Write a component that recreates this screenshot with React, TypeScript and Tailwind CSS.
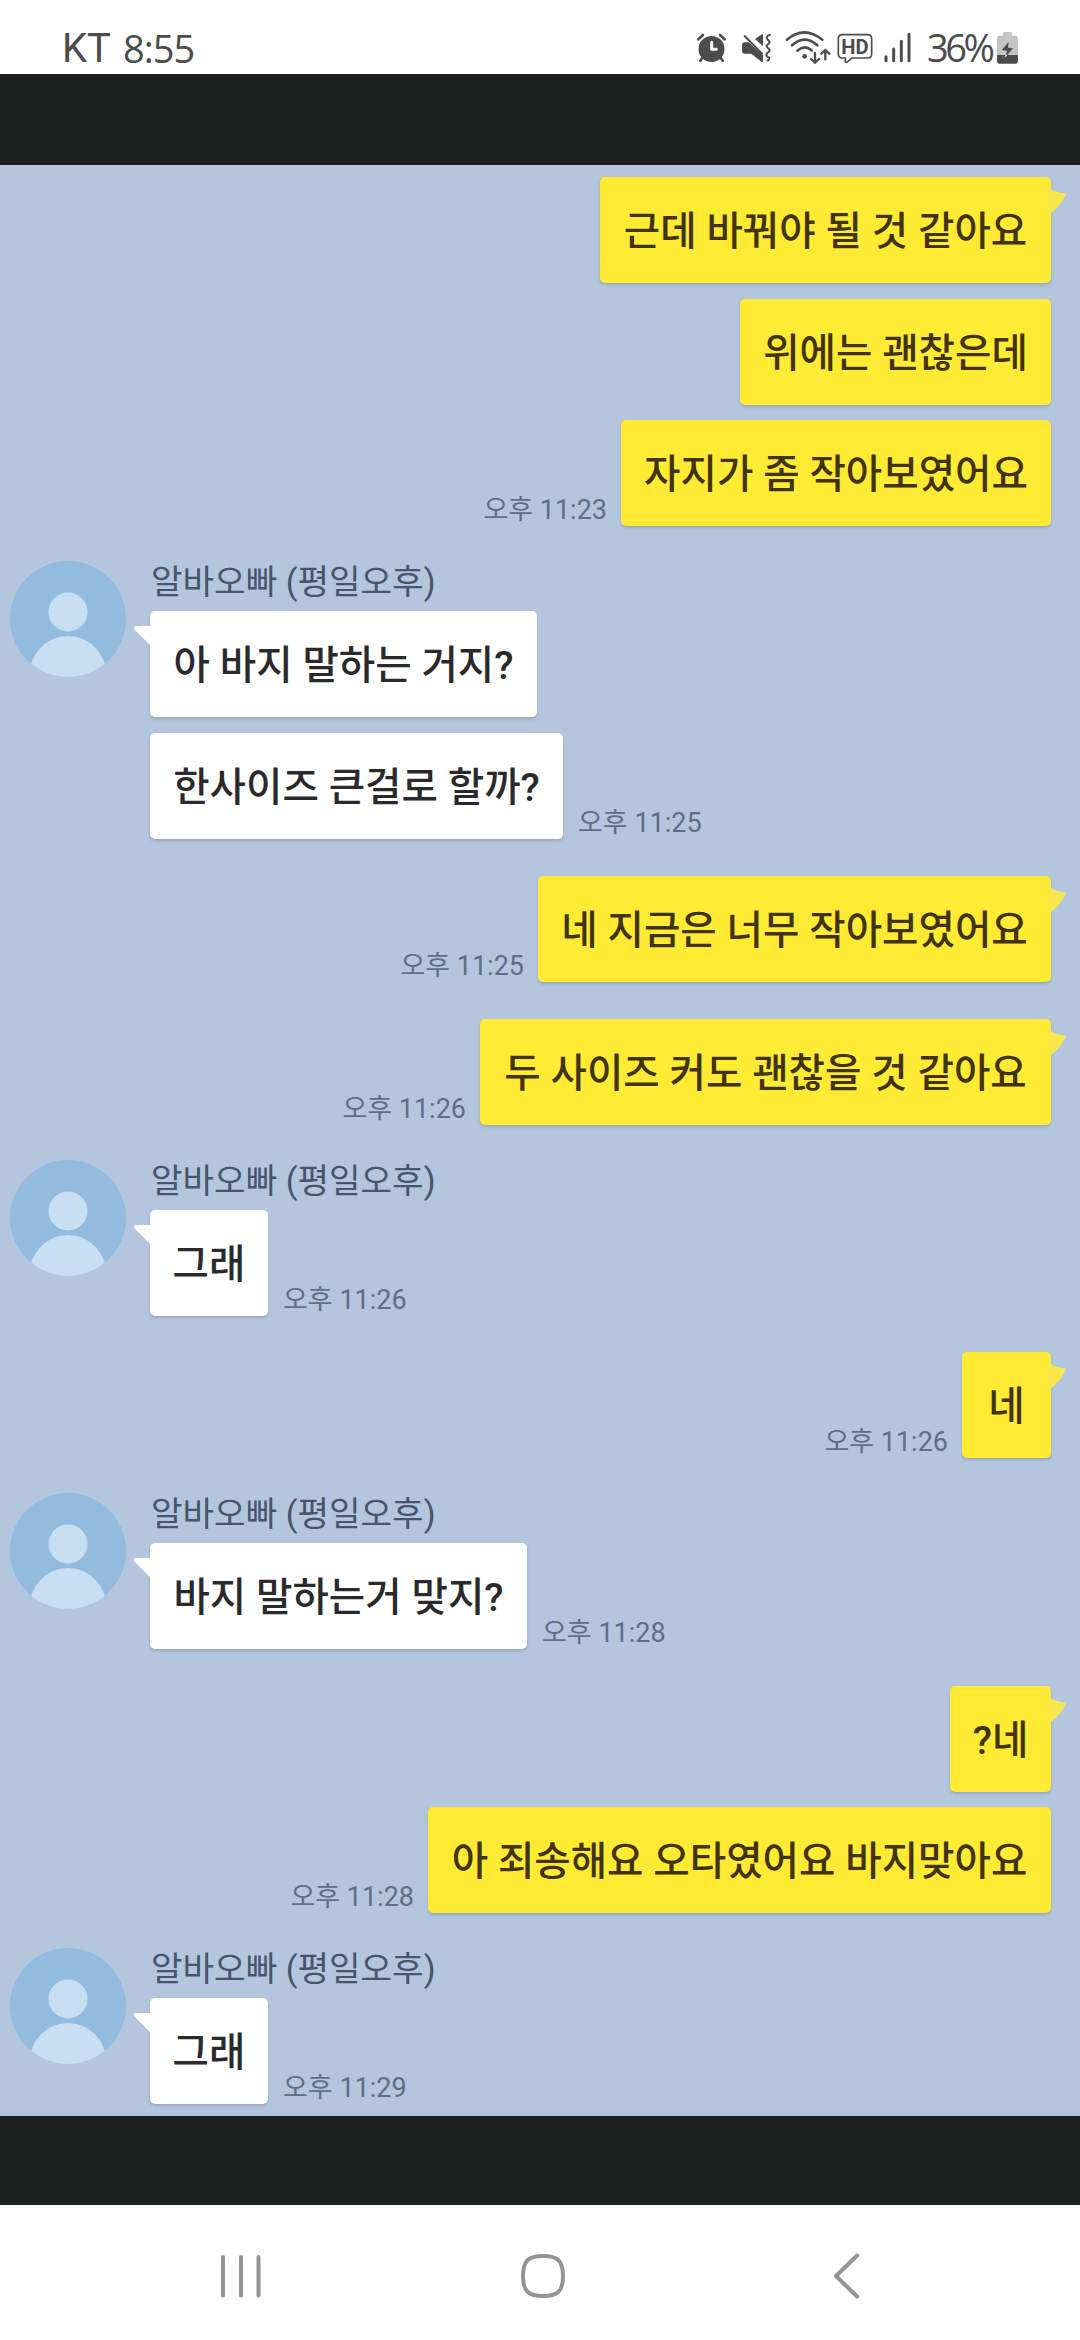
import React from "react";
import clsx from "clsx";

type Message = {
  text: string;
  mine?: boolean;
  time?: string;
  // first bubble of a group gets the tail (and the avatar when it is not mine)
  first?: boolean;
  width: string;
  gap: string;
};

const SENDER = "알바오빠 (평일오후)";

const messages: Message[] = [
  { text: "근데 바꿔야 될 것 같아요", mine: true, first: true, width: "w-[451px]", gap: "mt-3" },
  { text: "위에는 괜찮은데", mine: true, width: "w-[311px]", gap: "mt-4" },
  { text: "자지가 좀 작아보였어요", mine: true, time: "오후 11:23", width: "w-[430px]", gap: "mt-[15px]" },
  { text: "아 바지 말하는 거지?", first: true, width: "w-[387px]", gap: "mt-[35px]" },
  { text: "한사이즈 큰걸로 할까?", time: "오후 11:25", width: "w-[413px]", gap: "mt-4" },
  { text: "네 지금은 너무 작아보였어요", mine: true, first: true, time: "오후 11:25", width: "w-[513px]", gap: "mt-[37px]" },
  { text: "두 사이즈 커도 괜찮을 것 같아요", mine: true, first: true, time: "오후 11:26", width: "w-[571px]", gap: "mt-[37px]" },
  { text: "그래", first: true, time: "오후 11:26", width: "w-[118px]", gap: "mt-[35px]" },
  { text: "네", mine: true, first: true, time: "오후 11:26", width: "w-[89px]", gap: "mt-9" },
  { text: "바지 말하는거 맞지?", first: true, time: "오후 11:28", width: "w-[377px]", gap: "mt-[35px]" },
  { text: "?네", mine: true, first: true, width: "w-[101px]", gap: "mt-[37px]" },
  { text: "아 죄송해요 오타였어요 바지맞아요", mine: true, time: "오후 11:28", width: "w-[623px]", gap: "mt-[15px]" },
  { text: "그래", first: true, time: "오후 11:29", width: "w-[118px]", gap: "mt-[35px]" },
];

const Avatar: React.FC = () => (
  <svg viewBox="0 0 116 116" className="h-[116px] w-[116px]">
    <defs>
      <clipPath id="avatar-circle">
        <circle cx="58" cy="58" r="58" />
      </clipPath>
    </defs>
    <g clipPath="url(#avatar-circle)">
      <rect width="116" height="116" fill="#93bbde" />
      <circle cx="58" cy="51" r="19.5" fill="#c8def2" />
      <ellipse cx="58" cy="116" rx="39" ry="41" fill="#c8def2" />
    </g>
  </svg>
);

const Bubble: React.FC<{ message: Message }> = ({ message }) => (
  <div
    className={clsx(
      "relative flex h-[106px] items-center justify-center rounded-[5px] text-[39.6px] font-medium whitespace-pre shadow-[0_2px_3px_rgba(110,125,150,0.4)]",
      message.width,
      message.mine ? "bg-[#ffeb33] text-[#41330b]" : "bg-white text-[#2a2a2c]"
    )}
  >
    {message.first && message.mine && (
      <svg viewBox="0 0 18 30" className="absolute top-[8px] -right-[15px] h-[30px] w-[18px]">
        <path d="M0 0 Q4 8 18 8.5 Q14 20 3 28 H0Z" fill="#f8e74a" />
      </svg>
    )}
    {message.first && !message.mine && (
      <svg viewBox="0 0 20 22" className="absolute top-[14px] -left-[17px] h-[22px] w-[20px]">
        <path d="M20 1 H2 Q0 2 1 4 L17 20 H20Z" fill="#ffffff" />
      </svg>
    )}
    <span className="pt-[3px]">{message.text}</span>
  </div>
);

const Time: React.FC<{ children: React.ReactNode }> = ({ children }) => (
  <span className="mb-px text-[27px] leading-[30px] whitespace-pre text-[#5d6e86]">{children}</span>
);

const MessageRow: React.FC<{ message: Message }> = ({ message }) => {
  if (message.mine) {
    return (
      <div className={clsx("flex items-end justify-end gap-[14px] pr-[29px]", message.gap)}>
        {message.time && <Time>{message.time}</Time>}
        <Bubble message={message} />
      </div>
    );
  }
  return (
    <div className={clsx("flex pl-[10px]", message.gap)}>
      <div className="h-[106px] w-[140px] shrink-0">{message.first && <Avatar />}</div>
      <div>
        {message.first && (
          <div className="h-[50px] pt-[3px] pl-px text-[34.3px] leading-[36px] whitespace-pre text-[#46556b]">{SENDER}</div>
        )}
        <div className="flex items-end gap-[15px]">
          <Bubble message={message} />
          {message.time && <Time>{message.time}</Time>}
        </div>
      </div>
    </div>
  );
};

const StatusBar: React.FC = () => (
  <header className="flex h-[74px] items-start bg-white pr-[61px] pl-[62px] text-[#4c4c4c]">
    <div className="flex pt-[25px] text-[40px] leading-[47px]">
      <span className="w-[61px] font-['Roboto']">KT</span>
      <span className="font-['Open_Sans'] text-[38px] tracking-[-1px]">8:55</span>
    </div>

    <div className="ml-auto flex pt-[30px]">
      {/* alarm */}
      <svg viewBox="48 60 93 102" className="h-[34px] w-[31px]" fill="none" stroke="currentColor" strokeLinecap="round">
        <circle cx="94.5" cy="117" r="39" fill="currentColor" stroke="none" />
        <path d="M55 88 L69 75 M134 88 L120 75 M67 143 L61 152 M122 143 L128 152" strokeWidth="8" />
        <path d="M95 97 V118 H109" stroke="#fff" strokeWidth="9" strokeLinejoin="round" />
      </svg>
      {/* vibrate / muted */}
      <svg viewBox="183 60 93 102" className="ml-[14px] h-[34px] w-[31px]" fill="currentColor" stroke="currentColor">
        <path d="M225 87 L246 73 Q249 71 249 75 V109Z" stroke="none" />
        <path d="M194 97 H206 L249 136 V153 Q249 158 244 155 L214 131 H194 Q186 131 186 122 V106 Q186 97 194 97Z" stroke="none" />
        <path d="M194 78 L246 131" strokeWidth="6" strokeLinecap="round" fill="none" />
        <path d="M270 74 Q257 80 261 86 Q264 90 268 94 Q271 99 262 104 Q257 109 264 114 Q271 119 268 124 Q258 130 259 136 Q261 140 267 143 Q270 147 263 152" strokeWidth="6" strokeLinecap="round" fill="none" />
      </svg>
      {/* wifi */}
      <svg viewBox="315 60 138 102" className="ml-[13px] h-[34px] w-[46px]" fill="none" stroke="currentColor" strokeWidth="8" strokeLinecap="round">
        <path d="M321 89 Q372 45 427 89" />
        <path d="M336 106 Q374 72 412 106" />
        <path d="M352 122 Q374 103 395 121" />
        <circle cx="374" cy="139" r="7" fill="currentColor" stroke="none" />
        <path d="M405 129 V157 M393 147 L405 158 L417 147 M436 148 V121 M424 131 L436 120 L448 131" strokeWidth="7" />
      </svg>
      {/* HD voice */}
      <svg viewBox="471 60 108 102" className="ml-[6px] h-[34px] w-[36px]">
        <path
          d="M487 74 H563 Q575 74 575 86 V132 Q575 144 563 144 H516 L500 157 Q496 158 496 153 V144 H487 Q475 144 475 132 V86 Q475 74 487 74Z"
          fill="none"
          stroke="currentColor"
          strokeWidth="5"
        />
        <text x="525" y="131" textAnchor="middle" textLength="82" lengthAdjust="spacingAndGlyphs" fill="currentColor" className="font-['Roboto'] text-[62px] font-bold">HD</text>
      </svg>
      {/* signal */}
      <svg viewBox="609 60 87 102" className="ml-[10px] h-[34px] w-[29px]" stroke="currentColor" strokeWidth="9" strokeLinecap="round">
        <path d="M618 140 V152 M641 117 V152 M664 94 V152 M687 73 V152" />
      </svg>
      <span className="-mt-[8px] w-[84px] pl-[15px] font-['Open_Sans'] text-[38px] leading-[50px] tracking-[-3.5px]">36%</span>
      {/* battery */}
      <svg viewBox="948 60 69 102" className="h-[34px] w-[23px]">
        <path d="M973 66 H992 Q996 66 996 70 V77 H1006 Q1014 77 1014 86 V136 H951 V86 Q951 77 959 77 H969 V70 Q969 66 973 66Z" fill="#c4c4c4" />
        <path d="M951 135 H1014 V152 Q1014 161 1006 161 H959 Q951 161 951 152Z" fill="#4c4c4c" />
        <path d="M986 96 L965 120 L981 122 L977 141 L999 115 L984 113Z" fill="#4c4c4c" />
        <path d="M973 144 L976 135 H983Z" fill="#e2e2e2" />
      </svg>
    </div>
  </header>
);

const NavBar: React.FC = () => (
  <nav className="flex h-[135px] items-start bg-white pt-[48px] pl-[219px] text-[#949494]">
    <svg viewBox="0 0 44 46" className="h-[46px] w-[44px]" stroke="currentColor" strokeWidth="4" strokeLinecap="round">
      <path d="M4 4 V42.500 M22 4 V42.500 M39.500 4 V42.500" />
    </svg>
    <svg viewBox="0 0 48 46" className="ml-[256px] h-[46px] w-[48px]" fill="none" stroke="currentColor" strokeWidth="4">
      <path d="M24 3 C38 3 44 7 44 23 C44 39 38 43 24 43 C10 43 4 39 4 23 C4 7 10 3 24 3Z" />
    </svg>
    <svg viewBox="0 0 32 46" className="ml-[264px] h-[46px] w-[32px]" fill="none" stroke="currentColor" strokeWidth="4" strokeLinecap="round" strokeLinejoin="round">
      <path d="M26 2.500 L5 23 L26 43.500" />
    </svg>
  </nav>
);

const App: React.FC = () => {
  return (
    <div className="flex h-[2340px] w-[1080px] flex-col overflow-hidden bg-[#1e201f] font-['Roboto','Noto_Sans_CJK_KR',sans-serif]">
      <StatusBar />
      <main className="mt-[91px] h-[1951px] bg-[#b4c6de]">
        <div className="flow-root">
          {messages.map((message, i) => (
            <MessageRow key={i} message={message} />
          ))}
        </div>
      </main>
      <div className="h-[89px]" />
      <NavBar />
    </div>
  );
};

export default App;
